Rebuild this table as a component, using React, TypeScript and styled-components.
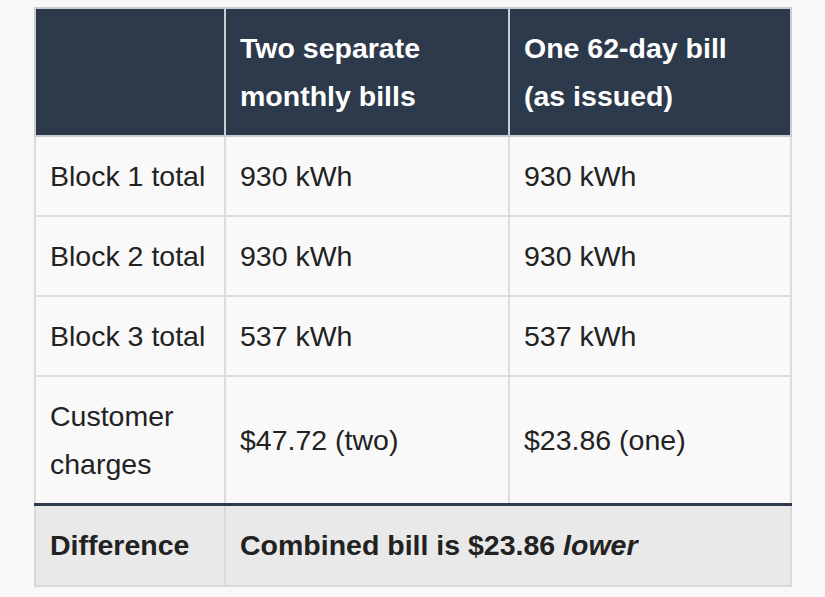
import React from "react";
import styled, { createGlobalStyle } from "styled-components";

const Global = createGlobalStyle`
  html, body { margin: 0; padding: 0; background: #f8f8f8; }
  body { font-family: "Liberation Sans", Arial, sans-serif; }
`;

const Page = styled.div`
  padding: 7px 0 0 34px;
`;

const Table = styled.table`
  border-collapse: collapse;
  width: 756px;
  table-layout: fixed;
  font-size: 28.5px;
  line-height: 48px;
  color: #222;
  border: 2px solid #d9d9d9;
`;

const Col = styled.col<{ $w: number }>`
  width: ${(p) => p.$w}px;
`;

const HeadCell = styled.th`
  background: #2d3a4c;
  color: #fff;
  font-weight: 700;
  text-align: left;
  vertical-align: middle;
  padding: 15px 14px;
  border: 2px solid #c9cdd2;
`;

const Cell = styled.td`
  background: #f9f9f9;
  text-align: left;
  vertical-align: middle;
  padding: 15px 14px;
  border: 2px solid #dcdcdc;
`;

const FootCell = styled.td`
  background: #e9e9e9;
  font-weight: 700;
  text-align: left;
  vertical-align: middle;
  padding: 15px 14px 16px;
  border: 2px solid #d9d9d9;
  border-top: 3px solid #2d3a4c;
`;

const rows: [string, string, string][] = [
  ["Block 1 total", "930 kWh", "930 kWh"],
  ["Block 2 total", "930 kWh", "930 kWh"],
  ["Block 3 total", "537 kWh", "537 kWh"],
  ["Customer charges", "$47.72 (two)", "$23.86 (one)"],
];

export default function App() {
  return (
    <Page>
      <Global />
      <Table>
        <colgroup>
          <Col $w={190} />
          <Col $w={284} />
          <Col $w={282} />
        </colgroup>
        <thead>
          <tr>
            <HeadCell />
            <HeadCell>
              Two separate
              <br />
              monthly bills
            </HeadCell>
            <HeadCell>
              One 62-day bill
              <br />
              (as issued)
            </HeadCell>
          </tr>
        </thead>
        <tbody>
          {rows.map((r) => (
            <tr key={r[0]}>
              <Cell>{r[0]}</Cell>
              <Cell>{r[1]}</Cell>
              <Cell>{r[2]}</Cell>
            </tr>
          ))}
        </tbody>
        <tfoot>
          <tr>
            <FootCell>Difference</FootCell>
            <FootCell colSpan={2}>
              Combined bill is $23.86 <em>lower</em>
            </FootCell>
          </tr>
        </tfoot>
      </Table>
    </Page>
  );
}
